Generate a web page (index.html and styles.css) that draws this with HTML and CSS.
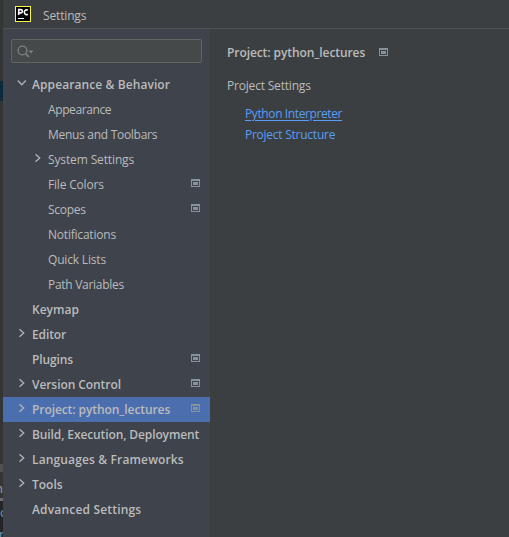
FILE: index.html
```
<!DOCTYPE html>
<html lang="en">
<head>
<meta charset="utf-8">
<title>Settings</title>
<link rel="stylesheet" href="styles.css">
</head>
<body>
<svg class="defs" width="0" height="0">
  <symbol id="right" viewBox="0 0 8 10"><path d="M1.5 1.2 5.7 5 1.5 8.8" fill="none" stroke="currentColor" stroke-width="1.4"/></symbol>
  <symbol id="down" viewBox="0 0 10 8"><path d="M.8 1.5 4.8 5.7 8.8 1.5" fill="none" stroke="currentColor" stroke-width="1.4"/></symbol>
  <symbol id="proj" viewBox="0 0 9 8"><path fill="currentColor" fill-rule="evenodd" d="M0 0h9v8H0zM1 2v5h7V2zM2 3h5v3H2z"/></symbol>
</svg>
<div class="screen">
  <div class="behind"><i class="blue"></i><i class="scroll"></i><i class="line"></i><i class="dark"></i><span class="frag f1">n</span><span class="frag f2">c</span><span class="frag f3">r</span></div>
  <div class="window">
    <header class="titlebar">
      <svg class="logo" width="16" height="16" viewBox="0 0 16 16"><path fill="#fcf84a" d="M0 0h16v16H0z"/><path d="M1 1h14v14H1z"/><path d="M3.7 9V3.6h2a1.6 1.6 0 0 1 0 3.3h-2M12.8 4.3a2.3 2.3 0 1 0 0 3.9" fill="none" stroke="#fff" stroke-width="1.6"/><path fill="#fff" d="M3 12h6v1H3z"/></svg>
      <span class="name">Settings</span>
    </header>
    <div class="body">
      <nav class="sidebar">
        <div class="search"><svg width="18" height="14" viewBox="0 0 18 14"><circle cx="5.5" cy="5.5" r="4.4" fill="none" stroke="#7d8387" stroke-width="1.3"/><path d="m8.7 8.7 3.2 3.2" stroke="#7d8387" stroke-width="1.5"/><path d="M11.5 5.5h5l-2.5 3z" fill="#7d8387"/></svg></div>
        <ul class="tree">
          <li class="group"><svg class="arrow open"><use href="#down"/></svg><span class="t1">Appearance &amp; Behavior</span></li>
          <li class="sub"><span class="t2">Appearance</span></li>
          <li class="sub"><span class="t3">Menus and Toolbars</span></li>
          <li class="sub"><svg class="arrow"><use href="#right"/></svg><span class="t4">System Settings</span></li>
          <li class="sub"><span class="t5">File Colors</span><svg class="mark"><use href="#proj"/></svg></li>
          <li class="sub"><span class="t6">Scopes</span><svg class="mark"><use href="#proj"/></svg></li>
          <li class="sub"><span class="t7">Notifications</span></li>
          <li class="sub"><span class="t8">Quick Lists</span></li>
          <li class="sub"><span class="t9">Path Variables</span></li>
          <li class="group"><span class="t10">Keymap</span></li>
          <li class="group"><svg class="arrow"><use href="#right"/></svg><span class="t11">Editor</span></li>
          <li class="group"><span class="t12">Plugins</span><svg class="mark"><use href="#proj"/></svg></li>
          <li class="group"><svg class="arrow"><use href="#right"/></svg><span class="t13">Version Control</span><svg class="mark"><use href="#proj"/></svg></li>
          <li class="group selected"><svg class="arrow"><use href="#right"/></svg><span class="t14">Project: python_lectures</span><svg class="mark"><use href="#proj"/></svg></li>
          <li class="group"><svg class="arrow"><use href="#right"/></svg><span class="t15">Build, Execution, Deployment</span></li>
          <li class="group"><svg class="arrow"><use href="#right"/></svg><span class="t16">Languages &amp; Frameworks</span></li>
          <li class="group"><svg class="arrow"><use href="#right"/></svg><span class="t17">Tools</span></li>
          <li class="group"><span class="t18">Advanced Settings</span></li>
        </ul>
      </nav>
      <main class="content">
        <h1><span class="t14">Project: python_lectures</span><svg class="mark"><use href="#proj"/></svg></h1>
        <p><span class="t19">Project Settings</span></p>
        <a class="link hover"><span class="t20">Python Interpreter</span></a>
        <a class="link"><span class="t21">Project Structure</span></a>
      </main>
    </div>
  </div>
</div>
</body>
</html>
```
FILE: styles.css
```
* { box-sizing: border-box; }
body { margin: 0; background: #3c3f41; color: #bbbbbb; font: 12px/25px "Open Sans", "Noto Sans", sans-serif; overflow: hidden; }
.defs { position: absolute; }
.screen { display: flex; width: 509px; height: 537px; }
.behind { position: relative; width: 3px; flex: none; background: #343635; overflow: hidden; }
.behind i { position: absolute; left: 0; width: 3px; }
.blue { top: 81px; height: 20px; background: #0d293e; }
.scroll { top: 464px; height: 8px; background: #505252; }
.line { top: 498px; height: 3px; background: #6b6d6e; }
.dark { top: 501px; height: 36px; background: #242526; }
.frag { position: absolute; left: -5px; font-size: 13px; line-height: 16px; color: #a0a4a8; }
.f1 { top: 480px; }
.f2 { top: 504px; left: 0; color: #6f9cc0; }
.f3 { top: 526px; left: -1px; color: #6f9cc0; }
.window { flex: 1; display: flex; flex-direction: column; min-width: 0; }
.titlebar { height: 29px; display: flex; align-items: center; padding-left: 12px; border-bottom: 1px solid #515151; }
.name { margin-left: 12px; padding-top: 3px; letter-spacing: -.15px; }
.body { flex: 1; display: flex; }
.sidebar { width: 207px; background: #3e434c; padding-top: 10px; }
.search { margin: 0 8px 0 8px; height: 24px; border: 1px solid #646464; border-radius: 2px; background: #45494a; padding: 5px 0 0 5px; display: flex; }
.tree { list-style: none; margin: 9px 0 0; padding: 0; }
.tree li { position: relative; display: flex; align-items: center; height: 25px; padding-left: 29px; white-space: nowrap; }
.tree li.sub { padding-left: 45px; }
.group, h1 { font-weight: 600; }
.tree .selected { background: #4b6eaf; }
.arrow { position: absolute; left: 15px; top: 6px; width: 8px; height: 10px; color: #afb1b3; }
.sub .arrow { left: 31px; }
.arrow.open { left: 14px; top: 7px; width: 10px; height: 8px; }
.mark { width: 9px; height: 8px; color: #87939a; }
.tree .mark { position: absolute; right: 10px; top: 7px; }
.content { flex: 1; padding: 11px 0 0 17px; }
h1 { margin: 0; font-size: 12px; height: 25px; display: flex; align-items: center; }
h1 .mark { margin: 0 0 1px 14px; }
p { margin: 8px 0 5px; }
.link { display: block; margin-left: 18px; line-height: 21px; color: #589df6; }
.hover span { text-decoration: underline; text-underline-offset: 2px; }
.t1 { letter-spacing: .09px; }
.t2 { letter-spacing: -.4px; }
.t3 { letter-spacing: -.29px; }
.t4 { letter-spacing: -.13px; }
.t5 { letter-spacing: -.18px; }
.t6 { letter-spacing: -.3px; }
.t7 { letter-spacing: -.21px; }
.t8 { letter-spacing: -.18px; }
.t9 { letter-spacing: -.29px; }
.t11, .t12 { letter-spacing: -.12px; }
.t13 { letter-spacing: -.07px; }
.t14 { letter-spacing: -.08px; }
.t15 { letter-spacing: -.11px; }
.t16 { letter-spacing: .14px; }
.t18 { letter-spacing: .18px; }
.t19 { letter-spacing: -.19px; }
.t20 { letter-spacing: -.39px; }
.t21 { letter-spacing: -.25px; }
```
